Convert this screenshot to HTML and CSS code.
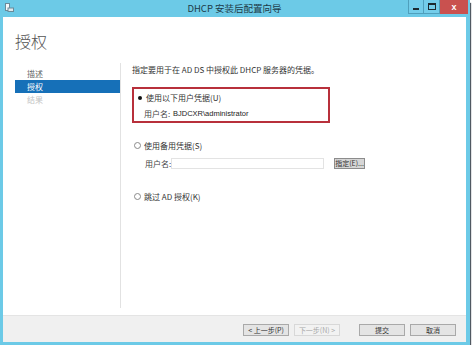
FILE: index.html
```html
<!DOCTYPE html>
<html lang="zh-CN">
<head>
    <meta charset="UTF-8">
    <title>DHCP 安装后配置向导</title>
    <link rel="stylesheet" href="styles.css">
</head>
<body>
  <div class="window">
    <div class="titlebar">
      <div class="app-icon">
        <svg width="9" height="9" viewBox="0 0 9 9">
          <rect x="0.5" y="0.5" width="4" height="7" fill="#f4f8fa" stroke="#6a8a99" stroke-width="1"/>
          <rect x="3" y="5" width="5.5" height="3.5" fill="#dfe8ec" stroke="#6a8a99" stroke-width="1"/>
        </svg>
      </div>
      <div class="title">DHCP 安装后配置向导</div>
      <div class="controls">
        <span class="ctl ctl-min"><i></i></span>
        <span class="ctl ctl-max"><i></i></span>
        <span class="ctl ctl-close">x</span>
      </div>
    </div>

    <div class="client">
      <div class="main">
        <h1>授权</h1>
        <div class="wizard">
          <ul class="steps">
            <li>描述</li>
            <li class="current">授权</li>
            <li class="disabled">结果</li>
          </ul>
          <div class="pane">
            <p class="intro">指定要用于在 AD DS 中授权此 DHCP 服务器的凭据。</p>

            <div class="highlight">
              <div class="option"><span class="radio checked"></span>使用以下用户凭据(U)</div>
              <div class="cred-row">
                <span class="cred-label">用户名:</span>
                <span class="cred-value">BJDCXR\administrator</span>
              </div>
            </div>

            <div class="option option-alt"><span class="radio"></span>使用备用凭据(S)</div>
            <div class="cred-row alt-row">
              <span class="cred-label">用户名:</span>
              <span class="text-input"></span>
              <button class="small-btn" type="button">指定(E)...</button>
            </div>

            <div class="option option-skip"><span class="radio"></span>跳过 AD 授权(K)</div>
          </div>
        </div>
      </div>

      <div class="footer">
        <button class="btn" type="button">&lt; 上一步(P)</button>
        <button class="btn btn-disabled" type="button">下一步(N) &gt;</button>
        <button class="btn btn-gap" type="button">提交</button>
        <button class="btn" type="button">取消</button>
      </div>
    </div>
  </div>
</body>
</html>
```

FILE: styles.css
```css
body {
    margin: 0;
    padding: 0;
    background: #fff;
    font-family: "Noto Sans CJK SC", "Liberation Sans", sans-serif;
    color: #3a3a3a;
}
.window {
    width: 470px;
    height: 345px;
    box-sizing: border-box;
    padding: 0 4px 3px 3px;
    background: #6ccae7;
    display: flex;
    flex-direction: column;
    box-shadow: 1px 3px 1px rgba(50, 60, 70, 0.85);
}
.titlebar {
    height: 17px;
    display: grid;
    grid-template-columns: 1fr auto 1fr;
    align-items: start;
}
.app-icon {
    padding: 3px 0 0 2px;
    height: 9px;
}
.app-icon svg {
    display: block;
}
.title {
    font-size: 9.5px;
    line-height: 17px;
    color: #1d3b48;
}
.controls {
    justify-self: end;
    display: flex;
    margin-right: -2px;
}
.ctl {
    height: 14px;
    box-sizing: border-box;
    display: flex;
    align-items: center;
    justify-content: center;
}
.ctl-min, .ctl-max {
    width: 16px;
    border: 1px solid #4f9fbc;
    border-top: 0;
    background: #73cdea;
}
.ctl-max {
    border-left: 0;
}
.ctl-min i {
    display: block;
    width: 6px;
    height: 2px;
    margin-top: 4px;
    background: #1c2a30;
}
.ctl-max i {
    display: block;
    width: 6px;
    height: 4px;
    border: 1px solid #1c2a30;
    border-top-width: 2px;
}
.ctl-close {
    width: 28px;
    background: #c9514f;
    color: #fff;
    font-size: 9px;
    font-weight: bold;
    font-family: "Liberation Sans", sans-serif;
}
.client {
    flex: 1;
    display: flex;
    flex-direction: column;
    background: #fff;
}
.main {
    flex: 1;
    padding: 14px 0 7px 12px;
    display: flex;
    flex-direction: column;
}
.main h1 {
    margin: 0;
    font-size: 16px;
    line-height: 20px;
    font-weight: 300;
    color: #555;
}
.wizard {
    flex: 1;
    display: flex;
    margin-top: 12px;
}
.steps {
    list-style-type: none;
    margin: 0;
    padding: 4px 0 0 0;
    width: 105px;
    border-right: 1px solid #e2e2e2;
}
.steps li {
    height: 13px;
    line-height: 13px;
    padding-left: 12px;
    font-size: 8px;
    color: #666;
}
.steps li.current {
    background: #1670b8;
    color: #fff;
}
.steps li.disabled {
    color: #c4c4c4;
}
.pane {
    flex: 1;
    padding: 1px 0 0 11px;
    font-size: 8px;
}
.intro {
    margin: 0;
    line-height: 12px;
    color: #333;
}
.highlight {
    width: 198px;
    height: 36px;
    box-sizing: border-box;
    margin-top: 11px;
    border: 2px solid #b8303b;
    padding: 3px 0 0 2px;
}
.option {
    display: flex;
    align-items: center;
    height: 11px;
    line-height: 11px;
    color: #333;
}
.radio {
    width: 5px;
    height: 5px;
    border: 1px solid #8a8a8a;
    border-radius: 50%;
    margin-right: 3px;
    display: flex;
    align-items: center;
    justify-content: center;
    background: #fff;
}
.radio.checked {
    border-color: #fff;
}
.radio.checked::after {
    content: "";
    width: 4px;
    height: 4px;
    border-radius: 50%;
    background: #111;
}
.cred-row {
    display: flex;
    align-items: center;
    height: 13px;
    margin-top: 4px;
    padding-left: 8px;
}
.cred-label {
    width: 27px;
    flex-shrink: 0;
    white-space: nowrap;
    color: #444;
}
.cred-value {
    flex: 1;
    height: 13px;
    line-height: 13px;
    padding-left: 2px;
    color: #222;
    font-family: "Liberation Sans", "Noto Sans CJK SC", sans-serif;
    font-size: 7.5px;
}
.option-alt {
    margin-top: 17px;
    padding-left: 2px;
}
.alt-row {
    margin-top: 6px;
    padding-left: 13px;
}
.alt-row .cred-label {
    width: 26px;
}
.text-input {
    width: 153px;
    height: 11px;
    flex-shrink: 0;
    box-sizing: border-box;
    border: 1px solid #e3e3e3;
    background: #fff;
}
.small-btn {
    margin-left: 10px;
    width: 31px;
    height: 11px;
    flex-shrink: 0;
    padding: 0;
    border: 1px solid #8c8c8c;
    background: #d6d6d6;
    font-family: inherit;
    font-size: 7px;
    line-height: 9px;
    color: #333;
    white-space: nowrap;
}
.option-skip {
    margin-top: 21px;
    padding-left: 2px;
}
.footer {
    height: 27px;
    box-sizing: border-box;
    border-top: 1px solid #e4e4e4;
    background: #f0f0f0;
    display: flex;
    align-items: center;
    justify-content: flex-end;
    gap: 5px;
    padding: 1px 10px 0 0;
}
.btn {
    width: 46px;
    height: 12px;
    padding: 0;
    border: 1px solid #a9a9a9;
    background: #e4e4e4;
    font-family: inherit;
    font-size: 7px;
    line-height: 10px;
    color: #333;
    white-space: nowrap;
}
.btn-disabled {
    border-color: #d8d8d8;
    background: #f2f2f2;
    color: #a8a8a8;
}
.btn-gap {
    margin-left: 14px;
}
```
